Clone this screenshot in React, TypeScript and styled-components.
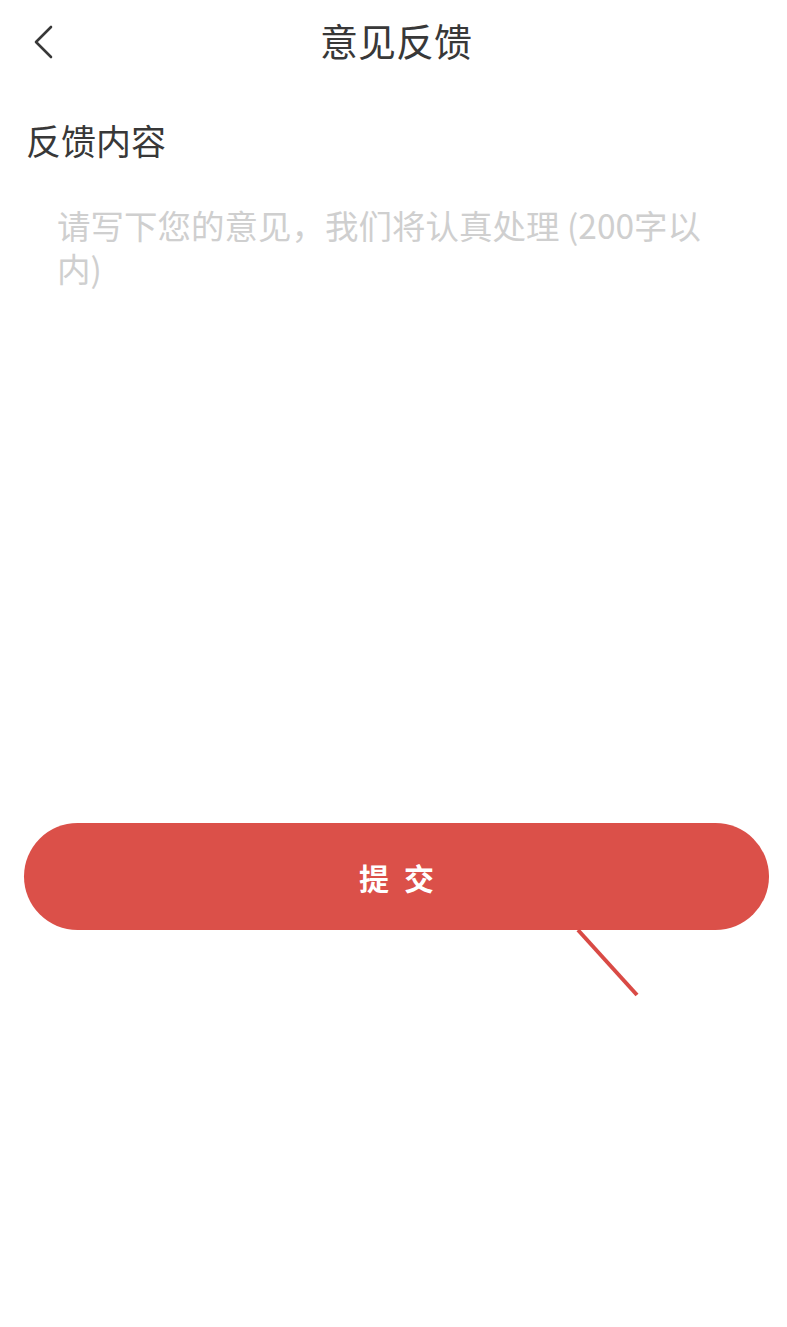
import React from "react";
import styled, { createGlobalStyle } from "styled-components";

const Global = createGlobalStyle`
  html, body {
    margin: 0;
    padding: 0;
    background: #ffffff;
  }
  body {
    font-family: "Noto Sans CJK SC", "Noto Sans", sans-serif;
  }
  * { box-sizing: border-box; }
`;

const Page = styled.div`
  width: 787px;
  min-height: 1327px;
  background: #ffffff;
  display: flex;
  flex-direction: column;
`;

const Header = styled.header`
  position: relative;
  height: 84px;
  display: flex;
  align-items: center;
  justify-content: center;
`;

const BackButton = styled.button`
  position: absolute;
  left: 26px;
  top: 20px;
  width: 36px;
  height: 44px;
  padding: 0;
  border: none;
  background: transparent;
  display: flex;
  align-items: center;
  justify-content: center;
  cursor: pointer;
`;

const Title = styled.h1`
  margin: 0;
  padding: 0 0 4px 5px;
  font-size: 38px;
  line-height: 44px;
  font-weight: 400;
  color: #383838;
`;

const Section = styled.section`
  display: flex;
  flex-direction: column;
  padding: 34px 26px 0 26px;
`;

const Label = styled.div`
  font-size: 35px;
  line-height: 44px;
  color: #383838;
`;

const Input = styled.textarea`
  display: block;
  margin-top: 41px;
  height: 560px;
  padding: 0 31px;
  border: none;
  outline: none;
  resize: none;
  background: transparent;
  font-family: "Noto Sans CJK SC", "Noto Sans", sans-serif;
  font-size: 33.5px;
  line-height: 43px;
  color: #333333;
  &::placeholder {
    color: #cfcfcf;
  }
`;

const ButtonWrap = styled.div`
  position: relative;
  margin: 60px 18px 0 24px;
`;

const Submit = styled.button`
  display: block;
  width: 100%;
  height: 107px;
  border: none;
  border-radius: 54px;
  background: #db5049;
  color: #ffffff;
  font-family: "Noto Sans CJK SC", "Noto Sans", sans-serif;
  font-size: 30px;
  font-weight: 700;
  letter-spacing: 15px;
  padding: 0 0 0 15px;
  cursor: pointer;
`;

const Stroke = styled.svg`
  position: absolute;
  top: 100%;
  left: 550px;
  width: 70px;
  height: 70px;
  overflow: visible;
`;

export default function App() {
  return (
    <Page>
      <Global />
      <Header>
        <BackButton aria-label="返回">
          <svg width="22" height="34" viewBox="0 0 22 34" fill="none">
            <path
              d="M18 2 L3 17 L18 32"
              stroke="#383838"
              strokeWidth="2.6"
              strokeLinecap="round"
              strokeLinejoin="round"
            />
          </svg>
        </BackButton>
        <Title>意见反馈</Title>
      </Header>
      <Section>
        <Label>反馈内容</Label>
        <Input placeholder="请写下您的意见，我们将认真处理 (200字以内)" />
      </Section>
      <ButtonWrap>
        <Submit>提交</Submit>
        <Stroke viewBox="0 0 70 70">
          <line x1="4" y1="0" x2="63" y2="65" stroke="#d94a45" strokeWidth="4" />
        </Stroke>
      </ButtonWrap>
    </Page>
  );
}
